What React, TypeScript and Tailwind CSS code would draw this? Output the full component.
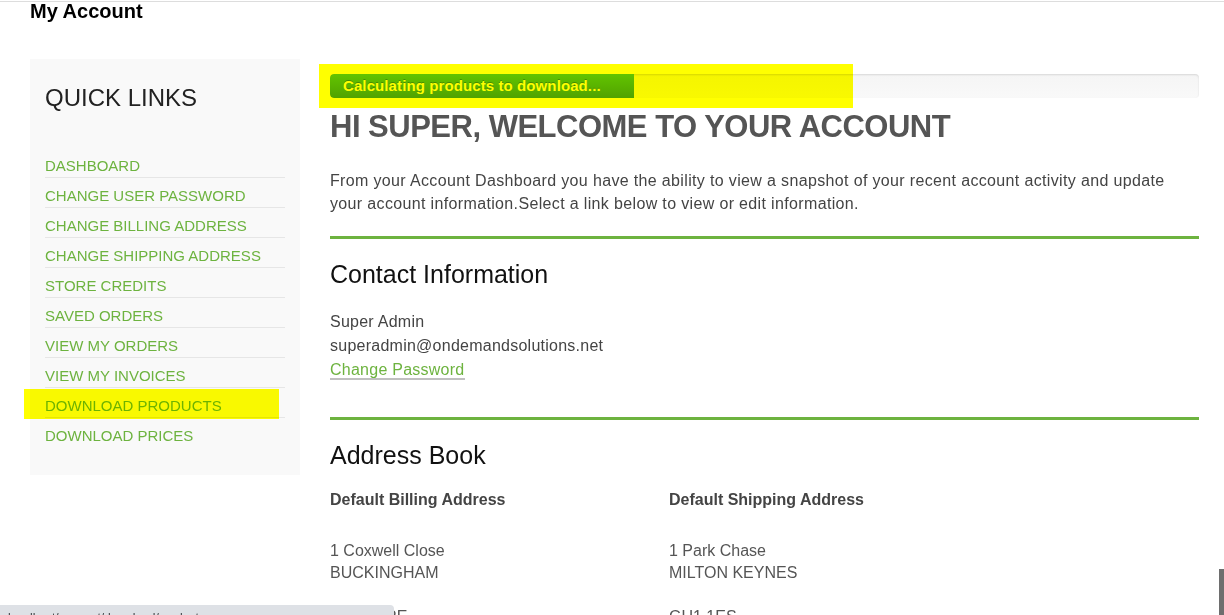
import React from 'react';

const quickLinks = [
  'Dashboard',
  'Change User Password',
  'Change Billing Address',
  'Change Shipping Address',
  'Store Credits',
  'Saved Orders',
  'View My Orders',
  'View My Invoices',
  'Download Products',
  'Download Prices',
];

const Sidebar = () => (
  <aside className="relative w-[270px] shrink-0 bg-[#f9f9f9] pt-[26px] pb-[28px]">
    <h2 className="px-[15px] text-[24px] leading-[26px] text-[#222]">QUICK LINKS</h2>
    <ul className="mx-[15px] mt-[37px]">
      {quickLinks.map((link) => (
        <li
          key={link}
          className="border-b border-[#e6e6e6] pt-2 pb-px text-[15px] leading-5 uppercase text-[#6db33f] last:border-b-0"
        >
          <a href="#">{link}</a>
        </li>
      ))}
    </ul>
    {/* highlighter mark */}
    <div className="pointer-events-none absolute left-[-6px] top-[330px] h-[30px] w-[255px] bg-[#ffff00] mix-blend-multiply" />
  </aside>
);

const ProgressBar = () => (
  <div className="relative">
    <div className="h-6 overflow-hidden rounded-[4px] bg-linear-to-b from-[#f5f5f5] to-[#f9f9f9] shadow-[inset_0_1px_2px_rgba(0,0,0,0.12)]">
      <div className="h-full w-[304px] whitespace-nowrap rounded-l-[4px] bg-linear-to-b from-[#62c462] to-[#51a351] pl-[13px] text-[15px] font-bold leading-6 tracking-[0.1px] text-white [text-shadow:0_-1px_0_rgba(0,0,0,0.25)]">
        Calculating products to download...
      </div>
    </div>
    <div className="pointer-events-none absolute left-[-11px] top-[-10px] h-[44px] w-[534px] bg-[#ffff00] mix-blend-multiply" />
  </div>
);

export default function App() {
  return (
    <div className="relative h-[615px] overflow-hidden bg-white font-['Liberation_Sans',Arial,sans-serif]">
      <div className="mt-px h-px bg-[#dddddd]" />
      <h1 className="pl-[30px] text-[20px] font-bold leading-[18px] text-black">My Account</h1>

      <div className="mt-[39px] flex items-start gap-[30px] pl-[30px] pr-[25px]">
        <Sidebar />

        <main className="min-w-0 flex-1 pt-[15px]">
          <ProgressBar />

          <h1 className="mt-[12px] text-[31px] font-bold leading-[34px] tracking-[-0.5px] text-[#555]">
            HI SUPER, WELCOME TO YOUR ACCOUNT
          </h1>
          <p className="mt-[25px] text-[16px] leading-[23px] tracking-[0.35px] text-[#444]">
            From your Account Dashboard you have the ability to view a snapshot of your recent account activity and update your account information.Select a link below to view or edit information.
          </p>

          <div className="mt-[21px] h-[3px] bg-[#6db33f]" />

          <h2 className="mt-[22px] text-[25px] leading-[26px] text-[#111]">Contact Information</h2>
          <div className="mt-[23px] text-[16px] leading-6 tracking-[0.25px] text-[#444]">
            <div>Super Admin</div>
            <div>superadmin@ondemandsolutions.net</div>
            <div>
              <a href="#" className="border-b-2 border-[#c0c0c0] text-[#6db33f]">Change Password</a>
            </div>
          </div>

          <div className="mt-[35px] h-[3px] bg-[#6db33f]" />

          <h2 className="mt-[22px] text-[25px] leading-[26px] text-[#111]">Address Book</h2>
          <div className="mt-[20px] grid grid-cols-[339px_1fr] text-[16px]">
            <div>
              <div className="font-bold leading-6 text-[#444]">Default Billing Address</div>
              <div className="mt-[28px] leading-[22px] text-[#555]">
                <div>1 Coxwell Close</div>
                <div>BUCKINGHAM</div>
                <div className="h-[22px]" />
                <div>MK18 7RE</div>
              </div>
            </div>
            <div>
              <div className="font-bold leading-6 text-[#444]">Default Shipping Address</div>
              <div className="mt-[28px] leading-[22px] text-[#555]">
                <div>1 Park Chase</div>
                <div>MILTON KEYNES</div>
                <div className="h-[22px]" />
                <div>GU1 1ES</div>
              </div>
            </div>
          </div>
        </main>
      </div>

      {/* browser link preview bubble */}
      <div className="absolute bottom-0 left-0 h-[10px] w-[394px] overflow-hidden rounded-tr-[4px] bg-[#dee1e6]">
        <div className="pl-[8px] pt-[6px] text-[12px] leading-[14px] whitespace-nowrap text-[#3c4043]">
          localhost/account/download/products
        </div>
      </div>

      {/* scrollbar thumb */}
      <div className="absolute bottom-0 right-0 h-[46px] w-[5px] bg-[#6e6e6e]" />
    </div>
  );
}
